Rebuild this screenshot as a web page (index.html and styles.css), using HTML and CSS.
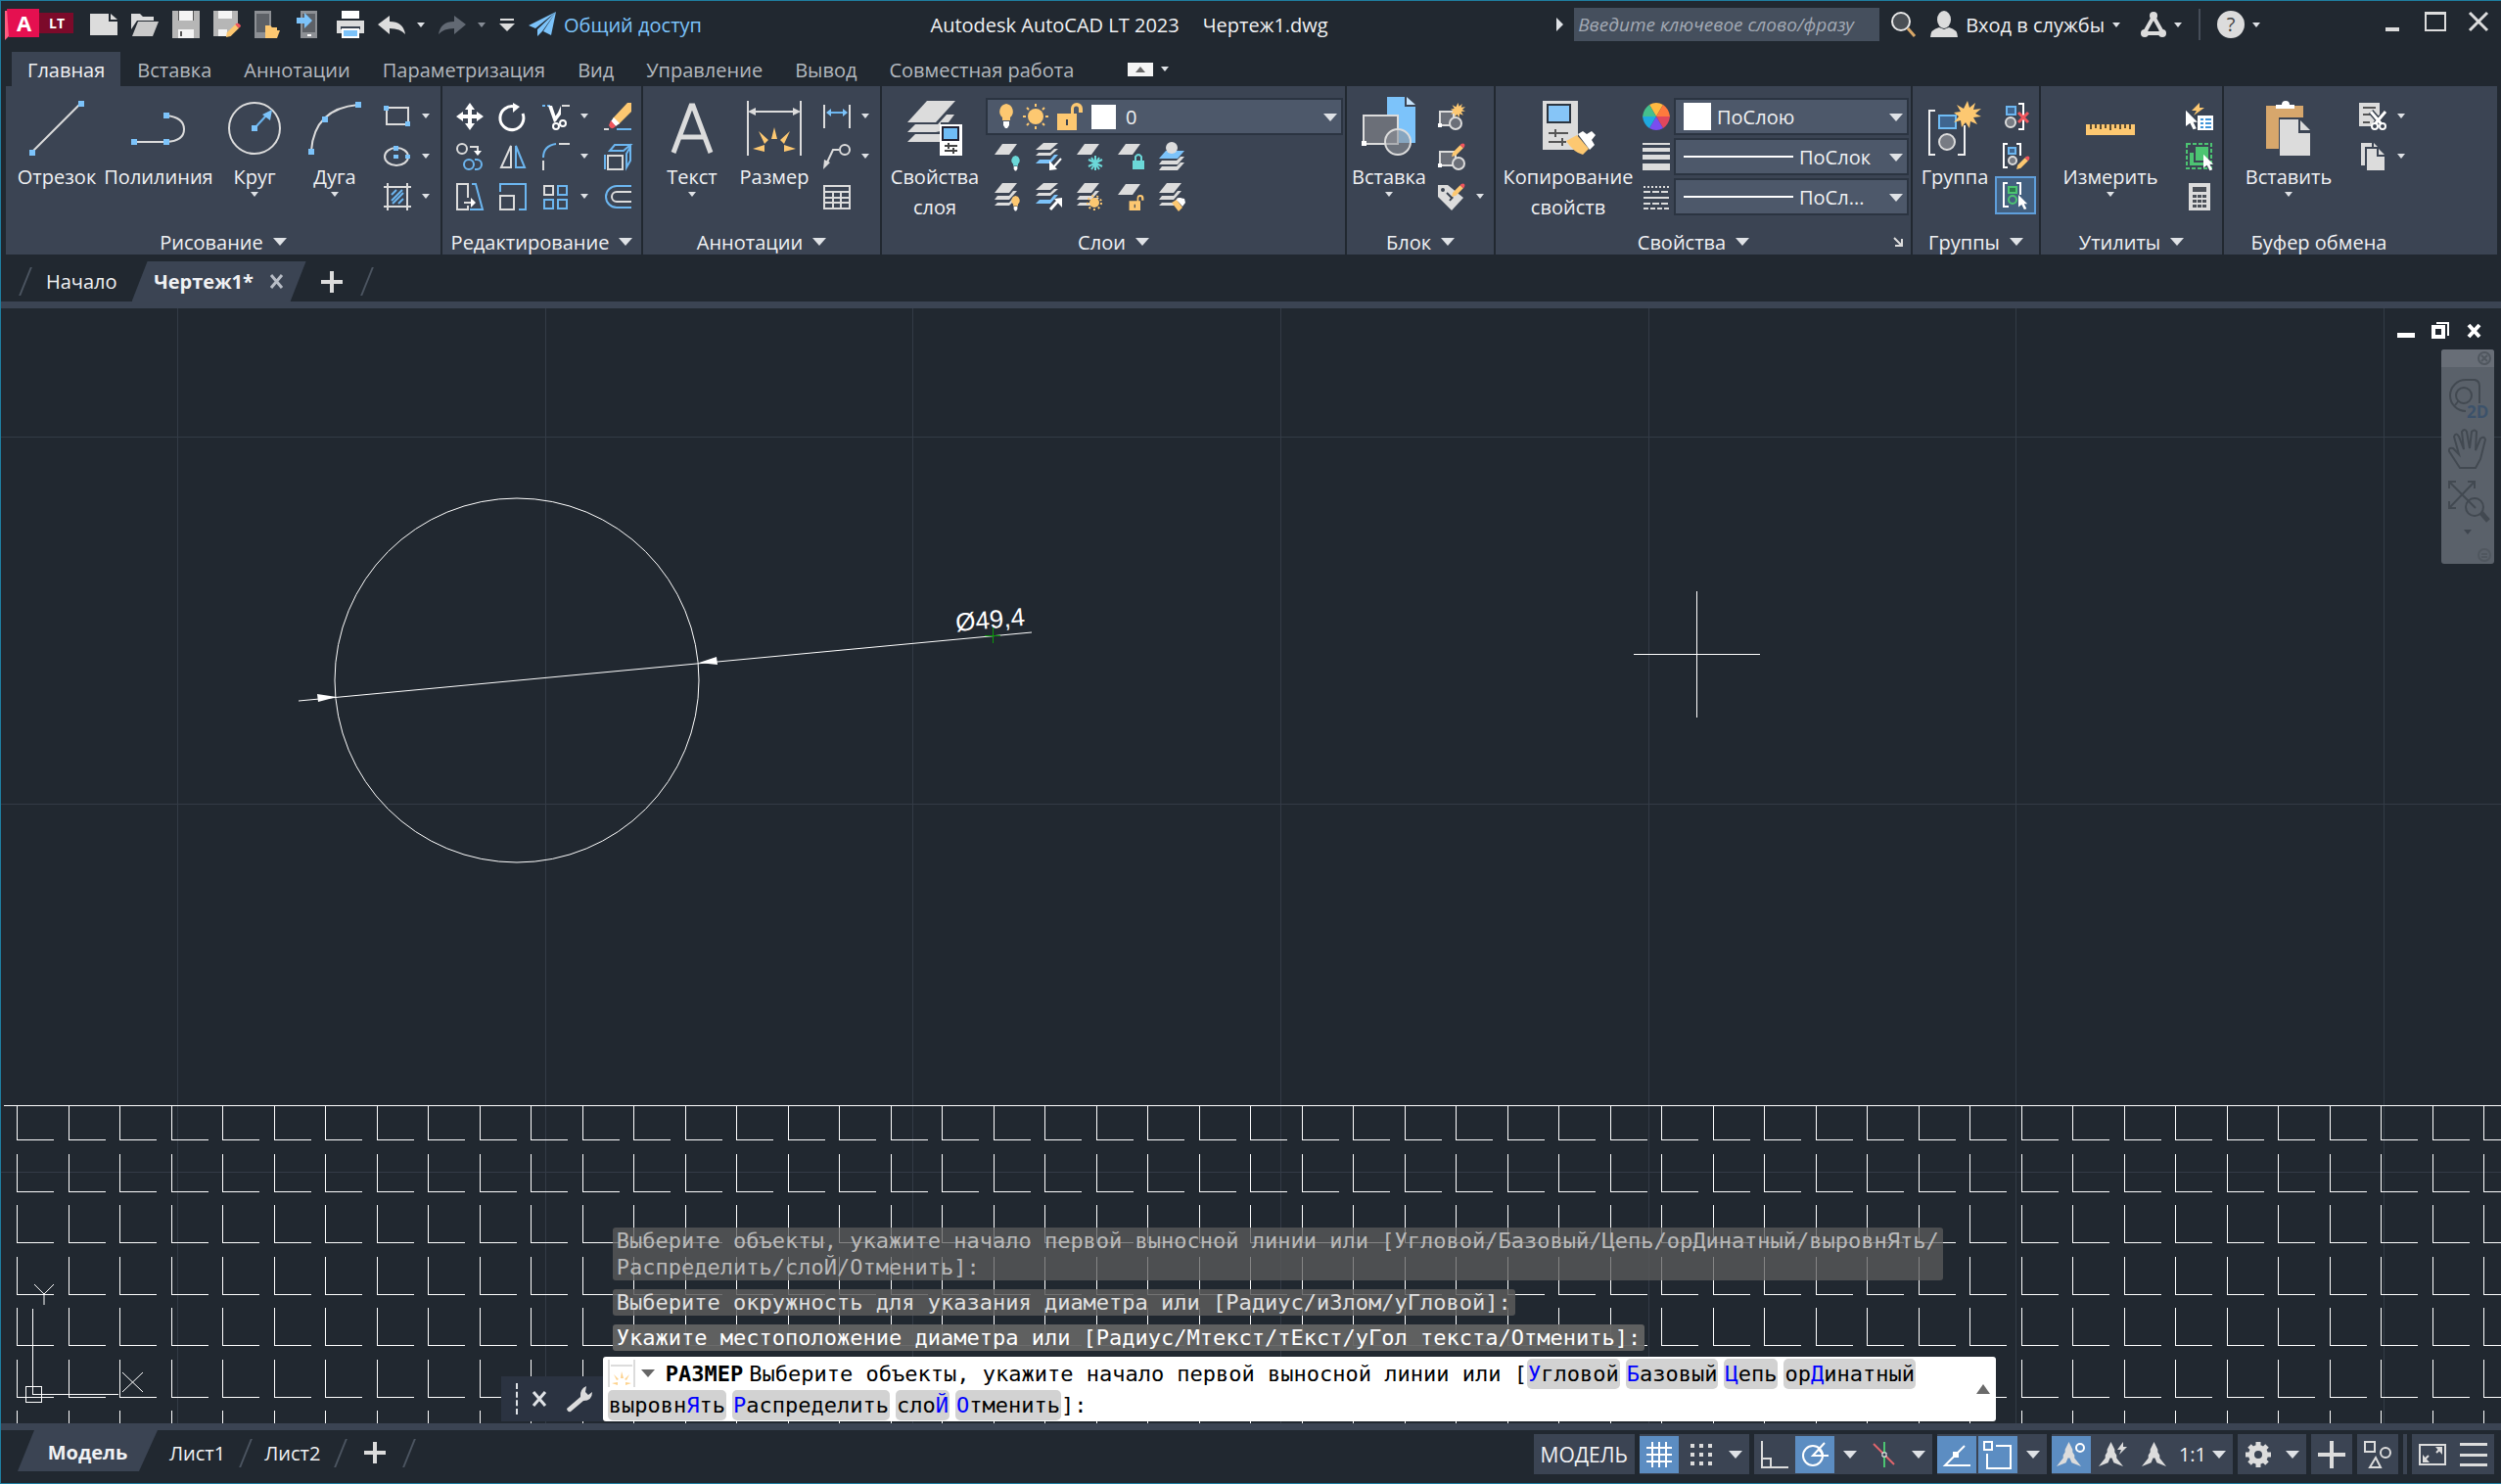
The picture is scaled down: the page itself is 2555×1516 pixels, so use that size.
FILE: index.html
```
<!DOCTYPE html>
<html lang="ru">

<head>
  <meta charset="UTF-8">
  <meta name="viewport" content="width=device-width, initial-scale=1.0">
  <title>Autodesk AutoCAD LT 2023</title>
  <link rel="stylesheet" href="styles.css">
</head>

<body>
  <!-- shared symbols -->
  <svg class="defs" aria-hidden="true">
    <symbol id="sheet1" viewBox="0 0 28 28"><path class="fl" d="M9 1h15l-8 11H1z"/></symbol>
    <symbol id="stack" viewBox="0 0 28 28">
      <path class="fl" d="M9 0h15l-8 10H1z"/>
      <path class="fl" d="M20 8h4l-8 9H1l3-4h12zM20 15h4l-8 8H1l3-3h12z"/>
    </symbol>
    <symbol id="stackblue" viewBox="0 0 28 28">
      <path class="fl" d="M9 0h15l-8 7H1z"/>
      <path class="fl" d="M20 6h4l-8 7H1l3-3h12z"/>
      <path class="fb" d="M20 12h4l-8 9H1l4-4h11z"/>
    </symbol>
    <symbol id="bulb" viewBox="0 0 16 26"><path d="M8 0a8 8 0 0 1 4 14v3H4v-3A8 8 0 0 1 8 0z"/><path class="fw" d="M5 18h6v4l-2 3H7l-2-3z"/></symbol>
    <symbol id="unlock" viewBox="0 0 26 28"><path d="M0 11h14V6a6 6 0 0 1 12 0v4h-4V6a2 2 0 0 0-5 0v5h3v17H0z"/><path d="M10 17v6" stroke="#39424f" stroke-width="2"/></symbol>
    <symbol id="pencil" viewBox="0 0 14 14"><path class="fy" d="M2 9l7-7 3 3-7 7-4 1z"/><path fill="#f0555c" d="M9 2l1-1q2-1 3 0t0 3l-1 1z"/></symbol>
    <symbol id="pencil-down" viewBox="0 0 17 17"><path class="fy" d="M2 11l9-9 4 4-9 9-5 1z"/><path fill="#f0555c" d="M11 2l1-1q2-1 4 1t0 3l-1 1z"/></symbol>
    <symbol id="cursor" viewBox="0 0 12 18"><path class="fw" d="M0 0l11 11H7l3 6-3 1-3-6-4 3z"/></symbol>
    <symbol id="burst" viewBox="0 0 28 28"><path class="fy" d="M14 0l2 7 6-5-2 7 8-1-6 5 6 3-8 1 4 7-7-3-1 7-4-6-4 5-1-7-7 2 5-6-5-4 7-1-4-7 7 4z"/></symbol>
    <symbol id="anno" viewBox="0 0 28 28"><path class="fl" d="M14 0l4 8v3l2 3v3l7 9-10-4-2-5h-2l-2 5-10 4 7-9v-3l2-3V8z"/></symbol>
  </svg>

  <div class="app">
    <header class="titlebar">
      <div class="logo">
        <svg width="70" height="32" viewBox="0 0 70 32">
          <path fill="#ff5c80" d="M0 2h7v23l-7 7z"/>
          <path fill="#e51050" d="M2 0h33v29H4z"/>
          <path fill="#7c0a2a" d="M35 4h35v21H35z"/>
          <text x="12" y="23" class="logo-a">A</text>
          <text x="45" y="20" class="logo-lt">LT</text>
        </svg>
      </div>
      <div class="quick">
        <button class="qbtn" aria-label="Создать"><svg width="28" height="28"><path class="fl" d="M0 3h19v8h9v14H0z"/><path class="fl" d="M21 3l7 6h-7z"/></svg></button>
        <button class="qbtn" aria-label="Открыть"><svg width="28" height="28"><path class="fl" d="M0 3h9l3 3h11v4H6L0 19z"/><path fill="#c9c9c9" d="M7 11h21l-6 15H1z"/></svg></button>
        <button class="qbtn" aria-label="Сохранить"><svg width="28" height="28"><path fill="#b6b6b6" d="M0 0h28v28H0z"/><path fill="#f4f4f4" d="M6 0h15v10H6zM6 19h16v9H6z"/><path fill="#555" d="M6 0h1v10H6zM21 0h1v10h-1zM8 21h2v5H8z"/></svg></button>
        <button class="qbtn" aria-label="Сохранить как"><svg width="28" height="28"><path fill="#b6b6b6" d="M0 0h25v14L13 26H0z"/><path fill="#f4f4f4" d="M5 0h14v8H5zM5 19h9v7H5z"/><use href="#pencil-down" x="12" y="12" width="16" height="16"/></svg></button>
        <button class="qbtn" aria-label="Открыть с мобильных устройств"><svg width="28" height="28"><path fill="#8d9095" d="M0 0h17v28H0z"/><path fill="#5d6167" d="M2 3h13v19H2z"/><path class="fy" d="M11 15h5l2 2h5v3h3l-3 8H11z"/></svg></button>
        <button class="qbtn" aria-label="Сохранить на мобильных устройствах"><svg width="28" height="28"><path fill="#8d9095" d="M5 0h17v28H5z"/><path fill="#5d6167" d="M7 3h13v19H7z"/><path class="fw" d="M12 24h4v2h-4z"/><path class="fb" d="M1 7h8V2l8 8-8 8v-5H1z"/></svg></button>
        <button class="qbtn" aria-label="Печать"><svg width="28" height="28"><path class="fw" d="M5 0h18v8H5z"/><path class="fl" d="M0 10h28v13H0z"/><path fill="#39424f" d="M4 16h20v3H4z"/><path class="fw" d="M5 18h18v10H5z"/><path class="fb" d="M7 20h14v6H7z"/></svg></button>
        <button class="qbtn undo" aria-label="Отменить"><svg width="28" height="28"><path class="fl" d="M0 14L12 5v6q14 0 16 13-5-6-16-6v6z"/></svg><i class="caret"></i></button>
        <button class="qbtn redo" aria-label="Повторить"><svg width="28" height="28"><path fill="#626973" d="M28 14L16 5v6Q2 11 0 24q5-6 16-6v6z"/></svg><i class="caret dim"></i></button>
        <button class="qbtn" aria-label="Адаптация"><svg width="16" height="16"><path class="fl" d="M1 2h14v2H1zM0 7h16l-8 8z"/></svg></button>
        <a class="share" href="#"><svg width="28" height="28" viewBox="0 0 28 28"><path class="fb" d="M28 1L0 15l7 3zM28 1L9 19v7l5-5zM28 1L15 21l8 4z"/></svg>Общий доступ</a>
      </div>
      <h1 class="doc-title"><span>Autodesk AutoCAD LT 2023</span><span>Чертеж1.dwg</span></h1>
      <div class="services">
        <i class="caret-right"></i>
        <input class="search" type="text" aria-label="Поиск" placeholder="Введите ключевое слово/фразу">
        <button class="icon-btn find" aria-label="Найти"><svg width="26" height="28"><circle cx="11" cy="11" r="9" fill="#4a4f55" stroke="#e8e8e8" stroke-width="2"/><path d="M18 18l7 8" stroke="#d9a868" stroke-width="3"/></svg></button>
        <button class="icon-btn login"><svg width="28" height="28"><ellipse cx="14" cy="9" rx="7" ry="9" class="fl"/><path class="fl" d="M0 27q0-8 9-10l5 2 5-2q9 2 9 10z"/></svg>Вход в службы<i class="caret"></i></button>
        <button class="icon-btn store" aria-label="Autodesk App Store"><svg width="26" height="28"><path d="M13 6L4 22M13 6l9 16M4 23h18" stroke="#dcdcdc" stroke-width="4" fill="none"/><circle cx="13" cy="5" r="4" class="fl"/><circle cx="4" cy="23" r="4" class="fl"/><circle cx="22" cy="23" r="4" class="fl"/></svg><i class="caret"></i></button>
        <i class="vline"></i>
        <button class="icon-btn" aria-label="Справка"><svg width="28" height="28"><circle cx="14" cy="14" r="14" class="fl"/><text x="14" y="21" class="help">?</text></svg><i class="caret"></i></button>
      </div>
      <div class="win">
        <button class="icon-btn" aria-label="Свернуть"><svg width="22" height="22"><path class="fl" d="M4 17h14v4H4z"/></svg></button>
        <button class="icon-btn" aria-label="Развернуть"><svg width="22" height="22"><path d="M1 2h20v18H1z" fill="none" stroke="#dcdcdc" stroke-width="2"/><path class="fl" d="M0 1h22v3H0z"/></svg></button>
        <button class="icon-btn" aria-label="Закрыть"><svg width="22" height="22"><path d="M2 2l18 18M20 2L2 20" stroke="#dcdcdc" stroke-width="3"/></svg></button>
      </div>
    </header>

    <nav class="tabs">
      <a class="tab active" href="#">Главная</a>
      <a class="tab" href="#">Вставка</a>
      <a class="tab" href="#">Аннотации</a>
      <a class="tab" href="#">Параметризация</a>
      <a class="tab" href="#">Вид</a>
      <a class="tab" href="#">Управление</a>
      <a class="tab" href="#">Вывод</a>
      <a class="tab" href="#">Совместная работа</a>
      <button class="fold" aria-label="Свернуть ленту"><svg width="26" height="14"><path fill="#f4f4f4" d="M0 0h26v14H0z"/><path fill="#666" d="M13 4l5 6H8z"/></svg><i class="caret"></i></button>
    </nav>

    <div class="ribbon">
      <!-- Рисование -->
      <section class="panel draw">
        <div class="panel-body">
          <button class="big w92"><svg width="56" height="56"><path class="s" d="M4 51L52 3"/><path class="fb" d="M0 50h6v6H0zM50 0h6v6h-6z"/></svg>Отрезок</button>
          <button class="big w112"><svg width="56" height="56"><path class="s" d="M4 42h32q18-1 18-13T36 15"/><path class="fb" d="M0 39h6v6H0zM33 39h6v6h-6zM33 12h6v6h-6z"/></svg>Полилиния</button>
          <button class="big w80"><svg width="56" height="56"><circle class="s" cx="28" cy="28" r="26"/><path class="b" d="M28 28l13-14"/><path class="fb" d="M25 25h6v6h-6zM46 9l-2 11-8-6z"/></svg>Круг<i class="caret"></i></button>
          <button class="big w80"><svg width="56" height="56"><path class="s" d="M4 51Q7 8 52 4"/><path class="fb" d="M1 49h6v6H1zM15 16h6v6h-6zM49 1h6v6h-6z"/></svg>Дуга<i class="caret"></i></button>
          <div class="stack">
            <button class="small" aria-label="Прямоугольник"><svg width="28" height="28"><path class="s" d="M3 5h22v17H3z"/><path class="fb" d="M0 3h5v5H0zM22 19h5v5h-5z"/></svg><i class="caret"></i></button>
            <button class="small" aria-label="Эллипс"><svg width="28" height="28"><ellipse class="s" cx="13" cy="14" rx="12" ry="9"/><path class="fb" d="M10 3h5v5h-5zM10 12h5v4h-5zM22 12h5v4h-5z"/></svg><i class="caret"></i></button>
            <button class="small" aria-label="Штриховка"><svg width="28" height="28"><path class="s" d="M0 4h28M0 24h28M4 0v28M24 0v28"/><path class="b" d="M8 12l5-5M8 18L19 7M9 21L20 10M15 21l5-5"/></svg><i class="caret"></i></button>
          </div>
        </div>
        <button class="panel-title">Рисование<i class="caret-lg"></i></button>
      </section>

      <!-- Редактирование -->
      <section class="panel edit">
        <div class="panel-body">
          <div class="stack">
            <button class="small" aria-label="Перенести"><svg width="28" height="28"><path class="fw" d="M14 0l5 7h-3v5h5V9l7 5-7 5v-3h-5v5h3l-5 7-5-7h3v-5H7v3l-7-5 7-5v3h5V7H9z"/></svg></button>
            <button class="small" aria-label="Копировать"><svg width="28" height="28"><circle class="s" cx="6" cy="6" r="5"/><path class="s" d="M14 4h8v6"/><path class="fw" d="M18 8h8l-4 5z"/><circle class="b" cx="13" cy="22" r="5"/><path class="b" d="M19 17h2a5 5 0 0 1 0 10h-2"/></svg></button>
            <button class="small" aria-label="Растянуть"><svg width="28" height="28"><path class="s" d="M12 15V1H1v26h11v-4"/><path class="b" d="M16 1h4l7 26H14"/><path class="s" d="M8 20h9"/><path class="fw" d="M15 15l5 5-5 5z"/></svg></button>
          </div>
          <div class="stack">
            <button class="small" aria-label="Повернуть"><svg width="28" height="28"><path d="M16 4A12 12 0 1 0 24 11" fill="none" stroke="#fff" stroke-width="3"/><path class="fw" d="M14 0l7 4-7 6z"/></svg></button>
            <button class="small" aria-label="Зеркало"><svg width="28" height="28"><path class="s" d="M12 3v22H2z"/><path class="b" d="M17 3v22h9z"/></svg></button>
            <button class="small" aria-label="Масштаб"><svg width="28" height="28"><path class="b" d="M1 9V1h26v26H20"/><path class="s" d="M1 13h14v14H1z"/></svg></button>
          </div>
          <div class="stack">
            <button class="small" aria-label="Обрезать"><svg width="28" height="28"><path class="b" d="M0 3h10" stroke-dasharray="3 2"/><path class="s" d="M20 3h8"/><path class="fw" d="M6 3h4l5 15-3 2zM19 3v9l-6 8-2-3 5-7z"/><circle cx="14" cy="24" r="3" fill="none" stroke="#fff" stroke-width="2"/><circle cx="21" cy="21" r="3" fill="none" stroke="#fff" stroke-width="2"/></svg><i class="caret"></i></button>
            <button class="small" aria-label="Сопряжение"><svg width="28" height="28"><path class="s" d="M17 1h11M1 18v10"/><path class="b" d="M1 15Q1 3 14 1"/></svg><i class="caret"></i></button>
            <button class="small" aria-label="Массив"><svg width="28" height="28"><path class="s" d="M2 3h9v9H2z"/><path class="b" d="M16 3h9v9h-9zM2 17h9v9H2zM16 17h9v9h-9z"/></svg><i class="caret"></i></button>
          </div>
          <div class="stack">
            <button class="small" aria-label="Стереть"><svg width="28" height="28"><path class="fy" d="M28 0v9L15 22l-6-6L24 0z"/><path class="fw" d="M10 15l6 6-4 3-5-5z"/><path fill="#f0555c" d="M7 18l5 6q-5 5-7-1z"/><path class="s" d="M0 27h5"/><path class="b" d="M13 27h15"/></svg></button>
            <button class="small" aria-label="Расчленить"><svg width="28" height="28"><path class="s" d="M4 13h15v14H4z"/><path class="b" d="M1 27V12M6 8l5-6h16l-7 6zM23 25V11l4-7v14z"/></svg></button>
            <button class="small" aria-label="Подобие"><svg width="28" height="28"><path class="b" d="M28 3H13a11 11 0 0 0 0 22h15"/><path class="s" d="M28 9H13a5 5 0 0 0 0 10h15"/></svg></button>
          </div>
        </div>
        <button class="panel-title">Редактирование<i class="caret-lg"></i></button>
      </section>

      <!-- Аннотации -->
      <section class="panel annot">
        <div class="panel-body">
          <button class="big w84"><svg width="56" height="56"><path d="M9 53L27 5h2l18 48M15 37h26" fill="none" stroke="#dcdcdc" stroke-width="5"/></svg>Текст<i class="caret"></i></button>
          <button class="big w84"><svg width="56" height="56"><path class="s" d="M1 0v56M55 0v56M4 11h48"/><path class="fl" d="M1 11l8-4v8zM55 11l-8-4v8z"/><path class="fy" d="M28 27l3 12h-6zM12 31l10 9-4 4zM44 31l-10 9 4 4zM6 49l12-4v7zM50 49l-12-4v7z"/></svg>Размер</button>
          <div class="stack">
            <button class="small" aria-label="Линейный"><svg width="28" height="28"><path class="s" d="M1 2v24M27 2v24"/><path class="b" d="M4 10h20"/><path class="fb" d="M3 10l5-4v8zM25 10l-5-4v8z"/></svg><i class="caret"></i></button>
            <button class="small" aria-label="Выноска"><svg width="28" height="28"><circle class="s" cx="22" cy="7" r="5"/><path class="s" d="M16 7h-6L3 22"/><path class="fl" d="M0 27l1-10 6 3z"/></svg><i class="caret"></i></button>
            <button class="small" aria-label="Таблица"><svg width="28" height="28"><path class="s" d="M1 3h26v23H1zM1 9h26M1 15h26M1 20h26M10 9v17M18 9v17"/></svg></button>
          </div>
        </div>
        <button class="panel-title">Аннотации<i class="caret-lg"></i></button>
      </section>

      <!-- Слои -->
      <section class="panel layers">
        <div class="panel-body">
          <button class="big w98"><svg width="56" height="56"><path class="fl" d="M20 0h29L29 22H0z"/><path class="fl" d="M40 14h8l-6 8H34v9l-5 1H0l8-8h23zM8 34h25v8H0z"/><path class="fw" d="M33 24h23v32H33z"/><path fill="#6fbcf5" stroke="#223" stroke-width="2" d="M36 27h16v13H36z"/><path d="M38 46h13M38 51h13M42 43v6M47 48v6" stroke="#444" stroke-width="2"/></svg>Свойства<br>слоя</button>
          <div class="layer-col">
            <div class="combo layer-combo">
              <svg width="16" height="26" class="fy"><use href="#bulb" width="16" height="26"/></svg>
              <svg width="26" height="26"><circle class="fy" cx="13" cy="13" r="8"/><path d="M13 0v3M13 23v3M0 13h3M23 13h3M4 4l2 2M20 20l2 2M22 4l-2 2M6 20l-2 2" stroke="#fdc871" stroke-width="2"/></svg>
              <svg width="26" height="28" class="fy"><use href="#unlock" width="26" height="28"/></svg>
              <i class="swatch"></i>
              <select aria-label="Слой"><option>0</option></select>
              <i class="caret-lg"></i>
            </div>
            <div class="layer-tools">
              <button class="small" aria-label="Отключить"><svg width="28" height="28"><use href="#sheet1" width="28" height="28"/><use href="#bulb" x="17" y="13" width="11" height="16" fill="#6bd8d8"/></svg></button>
              <button class="small" aria-label="Изолировать"><svg width="28" height="28"><use href="#stackblue" width="28" height="28"/><path d="M27 16l-8 9" stroke="#fff" stroke-width="2"/><path class="fw" d="M15 28V18l8 9z"/></svg></button>
              <button class="small" aria-label="Заморозить"><svg width="28" height="28"><use href="#sheet1" width="28" height="28"/><path d="M20 13v15M13 17l14 7M27 17l-14 7M16 15l8 12M24 15l-8 12" stroke="#6bd8d8" stroke-width="2"/></svg></button>
              <button class="small" aria-label="Блокировать"><svg width="28" height="28"><use href="#sheet1" width="28" height="28"/><path fill="#6bd8d8" d="M16 18h12v9H16z"/><path d="M19 18v-4q3-4 6 0v4" stroke="#6bd8d8" stroke-width="2" fill="none"/></svg></button>
              <button class="small" aria-label="Сделать текущим"><svg width="28" height="28"><path class="fb" d="M8 8h19l-7 8H1z"/><path class="fl" d="M23 14h4l-7 8H1l3-4h15zM23 20h4l-7 8H1l3-4h15z"/><circle class="fl" cx="14" cy="5" r="6"/></svg></button>
              <button class="small" aria-label="Включить все"><svg width="28" height="28" class="fy"><use href="#stack" width="28" height="28"/><use href="#bulb" x="17" y="13" width="11" height="16"/></svg></button>
              <button class="small" aria-label="Отменить изоляцию"><svg width="28" height="28"><use href="#stackblue" width="28" height="28"/><path d="M16 27l8-9" stroke="#fff" stroke-width="3"/><path class="fw" d="M28 15v10l-8-9z"/></svg></button>
              <button class="small" aria-label="Разморозить все"><svg width="28" height="28"><use href="#stack" width="28" height="28"/><circle class="fy" cx="19" cy="20" r="5"/><circle cx="19" cy="20" r="7" fill="none" stroke="#fdc871" stroke-width="2" stroke-dasharray="2 3"/></svg></button>
              <button class="small" aria-label="Разблокировать"><svg width="28" height="28" class="fy"><use href="#sheet1" width="28" height="28"/><use href="#unlock" x="12" y="12" width="16" height="16"/></svg></button>
              <button class="small" aria-label="Соответствие слоев"><svg width="28" height="28"><use href="#stack" width="28" height="28"/><path class="fy" d="M14 20l5-3 6 8-4 4z"/><path class="fw" d="M19 17l3-2 5 1 1 4-3 4z"/></svg></button>
            </div>
          </div>
        </div>
        <button class="panel-title">Слои<i class="caret-lg"></i></button>
      </section>

      <!-- Блок -->
      <section class="panel block">
        <div class="panel-body">
          <button class="big w76"><svg width="56" height="56" viewBox="0 4 56 56"><path class="fb" d="M26 0h18v10h11v37H26z"/><path fill="#c8e4fb" d="M46 0l9 8h-9z"/><path d="M2 19h35v29H2z" fill="#6b6f78" stroke="#dcdcdc" stroke-width="2"/><circle cx="37" cy="46" r="13" fill="#8f929999" stroke="#dcdcdc" stroke-width="2"/><path class="fw" d="M0 45h5v5H0z"/></svg>Вставка<i class="caret"></i></button>
          <div class="stack">
            <button class="small" aria-label="Создать блок"><svg width="28" height="28"><path d="M2 9h14v14H2z" fill="#6b6f78" stroke="#dcdcdc" stroke-width="2"/><circle cx="18" cy="21" r="6" fill="#6b6f78" stroke="#dcdcdc" stroke-width="2"/><path class="fw" d="M0 21h4v4H0z"/><use href="#burst" x="13" width="15" height="15"/></svg></button>
            <button class="small" aria-label="Редактор блоков"><svg width="28" height="28"><path d="M2 9h16v14H2z" fill="#6b6f78" stroke="#dcdcdc" stroke-width="2"/><circle cx="21" cy="21" r="6" fill="#6b6f78" stroke="#dcdcdc" stroke-width="2"/><path class="fw" d="M0 21h4v4H0z"/><use href="#pencil" x="13" width="15" height="15"/></svg></button>
            <button class="small" aria-label="Редактировать атрибуты"><svg width="28" height="28"><path class="fl" d="M0 2h10l16 13-12 13L0 14z"/><path d="M9 10l6 6M12 18l3-4" stroke="#39424f" stroke-width="2"/><circle cx="5" cy="7" r="2" fill="#39424f"/><use href="#pencil" x="13" width="15" height="15"/></svg><i class="caret"></i></button>
          </div>
        </div>
        <button class="panel-title">Блок<i class="caret-lg"></i></button>
      </section>

      <!-- Свойства -->
      <section class="panel props">
        <div class="panel-body">
          <button class="big w136"><svg width="56" height="56"><path class="fl" d="M2 0h36v50H2z"/><path fill="#86c5f7" stroke="#2c3540" stroke-width="2" d="M7 4h23v18H7z"/><path d="M8 33h20M8 42h18M15 29v8M22 38v8" stroke="#555" stroke-width="2"/><path class="fy" d="M26 41l11-6 12 14-6 6q-9-2-17-14z"/><path class="fw" d="M38 34l5-3 4 3 5-3 4 4-4 5 3 5-5 5z"/></svg>Копирование<br>свойств</button>
          <div class="stack">
            <span class="small"><svg width="28" height="28"><path fill="#ffb940" d="M14 14L7 2q7-4 14 0z"/><path fill="#ff7a3d" d="M14 14l7-12q6 4 7 12z"/><path fill="#e0475c" d="M14 14h14q-1 8-7 12z"/><path fill="#7a4df0" d="M14 14l7 12q-7 4-14 0z"/><path fill="#1fa9e0" d="M14 14L7 26Q1 22 0 14z"/><path fill="#45c08c" d="M14 14H0Q1 6 7 2z"/></svg></span>
            <span class="small"><svg width="28" height="28"><path class="fl" d="M0 0h28v2H0zM0 5h28v4H0zM0 12h28v5H0zM0 21h28v7H0z"/></svg></span>
            <span class="small"><svg width="28" height="28"><path d="M1 4h26" stroke="#dcdcdc" stroke-width="2" stroke-dasharray="2 2"/><path d="M1 9h26M1 21h26" stroke="#dcdcdc" stroke-width="2" stroke-dasharray="7 2"/><path d="M1 15h26" stroke="#dcdcdc" stroke-width="2"/><path d="M1 26h26" stroke="#dcdcdc" stroke-width="2" stroke-dasharray="5 2"/></svg></span>
          </div>
          <div class="combos">
            <div class="combo"><i class="swatch lg"></i><select aria-label="Цвет"><option>ПоСлою</option></select><i class="caret-lg"></i></div>
            <div class="combo"><i class="rule"></i><select aria-label="Вес линий"><option>ПоСлок</option></select><i class="caret-lg"></i></div>
            <div class="combo"><i class="rule"></i><select aria-label="Тип линий"><option>ПоСл...</option></select><i class="caret-lg"></i></div>
          </div>
        </div>
        <div class="panel-foot">
          <button class="panel-title">Свойства<i class="caret-lg"></i></button>
          <button class="launcher" aria-label="Свойства"><svg width="10" height="10"><path d="M1 1l7 7M9 2v7H2" stroke="#dcdcdc" stroke-width="2" fill="none"/></svg></button>
        </div>
      </section>

      <!-- Группы -->
      <section class="panel groups">
        <div class="panel-body">
          <button class="big w74"><svg width="56" height="56"><path d="M8 10H2v45h6M31 55h7V25" fill="none" stroke="#f0f0f0" stroke-width="2"/><path d="M12 15h17v13H12z" fill="#3f658f" stroke="#6fbcf5" stroke-width="2"/><circle cx="20" cy="42" r="8" fill="#777b83" stroke="#dcdcdc" stroke-width="2"/><use href="#burst" x="27" width="28" height="28"/></svg>Группа</button>
          <div class="stack">
            <button class="small" aria-label="Разгруппировать"><svg width="28" height="28"><path d="M4 4h9v8H4z" fill="#3f658f" stroke="#6cb6f0" stroke-width="2"/><circle cx="8" cy="20" r="5" fill="#777b83" stroke="#dcdcdc" stroke-width="2"/><path d="M16 1h5v26h-5" fill="none" stroke="#fff" stroke-width="2"/><path d="M16 10l10 10M26 10L16 20" stroke="#f0555c" stroke-width="3"/></svg></button>
            <button class="small" aria-label="Редактирование группы"><svg width="28" height="28"><path d="M5 1H1v24h4M14 1h4v12" fill="none" stroke="#fff" stroke-width="2"/><path d="M6 5h7v6H6z" fill="#3f658f" stroke="#6cb6f0" stroke-width="2"/><circle cx="10" cy="18" r="4" fill="#777b83" stroke="#dcdcdc" stroke-width="2"/><use href="#pencil" x="13" y="13" width="15" height="15"/></svg></button>
            <button class="small pressed" aria-label="Выбор группы"><svg width="28" height="28"><path d="M6 1H2v24h5M15 1h4v12" fill="none" stroke="#fff" stroke-width="2"/><path d="M7 5h8v6H7z" fill="#2b7a4d" stroke="#4cc472" stroke-width="2"/><circle cx="11" cy="18" r="4" fill="none" stroke="#4cc472" stroke-width="2"/><use href="#cursor" x="17" y="13" width="10" height="15"/></svg></button>
          </div>
        </div>
        <button class="panel-title">Группы<i class="caret-lg"></i></button>
      </section>

      <!-- Утилиты -->
      <section class="panel utils">
        <div class="panel-body">
          <button class="big w110"><svg width="56" height="56"><path class="fy" d="M3 24h50v11H3z"/><path d="M8 24v5M13 24v4M18 24v5M23 24v4M28 24v6M33 24v4M38 24v5M43 24v4M48 24v5" stroke="#5a4a30" stroke-width="2"/></svg>Измерить<i class="caret"></i></button>
          <div class="stack">
            <button class="small" aria-label="Быстрый выбор"><svg width="28" height="28"><use href="#cursor" y="7" width="13" height="21"/><path class="fw" d="M12 13h16v15H12z"/><path d="M15 17h3M20 17h6M15 21h3M20 21h6M15 25h3M20 25h6" stroke="#3f94d8" stroke-width="2"/><path class="fy" d="M14 0l-8 8h5l-3 5 11-8h-5z"/></svg></button>
            <button class="small" aria-label="Выбрать все"><svg width="28" height="28"><path d="M1 1h25v25H1z" fill="none" stroke="#4cc472" stroke-width="2" stroke-dasharray="4 2"/><path fill="#4cc472" d="M10 4h13v14H10zM4 10h4v10h10v3H4z"/><use href="#cursor" x="18" y="11" width="11" height="18"/></svg></button>
            <button class="small" aria-label="Калькулятор"><svg width="28" height="28"><path class="fl" d="M3 0h22v28H3z"/><path fill="#4b5058" d="M7 4h14v5H7zM7 12h4v3H7zM12 12h4v3h-4zM17 12h4v3h-4zM7 17h4v3H7zM12 17h4v3h-4zM17 17h4v3h-4zM7 22h4v3H7zM12 22h4v3h-4zM17 22h4v3h-4z"/></svg></button>
          </div>
        </div>
        <button class="panel-title">Утилиты<i class="caret-lg"></i></button>
      </section>

      <!-- Буфер обмена -->
      <section class="panel clip">
        <div class="panel-body">
          <button class="big w100"><svg width="56" height="56"><path fill="#d7a76c" d="M5 5h38v12H18v32H5z"/><path class="fw" d="M15 4h6q0-4 4-4t4 4h5v4H15z"/><path class="fl" d="M19 19h19v14h12v23H19z"/><path class="fl" d="M40 20l10 10H40z"/></svg>Вставить<i class="caret"></i></button>
          <div class="stack">
            <button class="small" aria-label="Вырезать"><svg width="28" height="28"><path class="fl" d="M0 0h21v24H0z"/><path d="M4 5h13M4 12h7M4 20h7" stroke="#555" stroke-width="2"/><path d="M12 9l13 15M27 9L15 24" stroke="#39424f" stroke-width="6"/><path d="M12 9l11 13M27 9L16 22" stroke="#fff" stroke-width="3"/><circle cx="16" cy="24" r="3" stroke="#fff" stroke-width="2" fill="#39424f"/><circle cx="24" cy="24" r="3" stroke="#fff" stroke-width="2" fill="#39424f"/></svg><i class="caret"></i></button>
            <button class="small" aria-label="Копировать в буфер"><svg width="28" height="28"><path class="fl" d="M2 0h11v4H6v19H2zM15 0l4 4h-4z"/><path class="fl" d="M8 6h10v8h8v14H8zM20 6l6 6h-6z"/></svg><i class="caret"></i></button>
          </div>
        </div>
        <div class="panel-title">Буфер обмена</div>
      </section>
      <div class="panel-rest"></div>
    </div>

    <nav class="files">
      <i class="slash"></i>
      <a class="file" href="#">Начало</a>
      <div class="file-active"><a href="#">Чертеж1*</a><button aria-label="Закрыть"><svg width="15" height="15"><path d="M2 1l11 13M13 1L2 14" stroke="#b8bdc6" stroke-width="3"/></svg></button></div>
      <button class="plus" aria-label="Новый чертеж"><svg width="22" height="22"><path class="fl" d="M9 0h4v9h9v4h-9v9H9v-9H0V9h9z"/></svg></button>
      <i class="slash"></i>
    </nav>

    <main class="canvas">
      <svg class="drawing" width="100%" height="100%">
        <defs>
          <pattern id="hatch" x="16" y="849" width="105" height="105" patternUnits="userSpaceOnUse">
            <path fill="#fff" d="M0 0h38v1H0zM53 0h38v1H53zM0 53h38v1H0zM53 53h38v1H53zM0 15h1v38H0zM0 67h1v38H0zM53 15h1v38h-1zM53 67h1v38h-1z"/>
          </pattern>
        </defs>
        <!-- grid -->
        <path class="grid" d="M180 0v1140M556 0v1140M931 0v1140M1307 0v1140M1683 0v1140M2058 0v1140M2434 0v1140M0 131h2554M0 506h2554M0 882h2554"/>
        <!-- hatch -->
        <rect x="2" y="814" width="100%" height="100%" fill="url(#hatch)"/>
        <rect x="3" y="814" width="100%" height="1" fill="#fff"/>
        <!-- circle and its diameter -->
        <circle cx="527" cy="380" r="186" class="line"/>
        <path class="line" d="M304 401L1053 331"/>
        <path class="fw" d="M343 397l-20-3 1 8zM713 362l18-6 1 8z"/>
        <text class="dim-text" transform="translate(976 330) rotate(-5)">Ø49,4</text>
        <path class="crisp" d="M1005 334h16M1013 326v16" stroke="#0a9a0a"/>
        <!-- crosshair -->
        <path class="line crisp" d="M1668 353h129M1732 289v129"/>
        <!-- UCS icon -->
        <path class="line crisp" d="M25 1101h16v16H25zM32 1022v87h88"/>
        <path class="line" d="M34 997l10 10 10-10M44 1007v11M124 1087l21 20M145 1087l-21 20"/>
      </svg>

      <div class="doc-win">
        <button aria-label="Свернуть чертеж"><svg width="18" height="18"><path class="fw" d="M0 11h18v5H0z"/></svg></button>
        <button aria-label="Восстановить чертеж"><svg width="18" height="18"><path d="M2 5h10v10H2z" fill="none" stroke="#fff" stroke-width="4"/><path d="M5 1h12v13" fill="none" stroke="#fff" stroke-width="2"/></svg></button>
        <button aria-label="Закрыть чертеж"><svg width="18" height="18"><path d="M3 3l11 12M14 3L3 15" stroke="#fff" stroke-width="4"/></svg></button>
      </div>

      <div class="navbar">
        <div class="nav-head"><svg width="14" height="14"><circle cx="7" cy="7" r="6"/><path d="M4 4l6 6M10 4l-6 6"/></svg></div>
        <button aria-label="Штурвал 2D"><svg width="44" height="44"><path d="M20 35A16 16 0 1 1 20 3h9q5 1 5 6v18"/><circle cx="18" cy="19" r="8"/><path d="M9 29l4-5"/><text x="21" y="42">2D</text></svg></button>
        <button aria-label="Панорамирование"><svg width="44" height="44"><path d="M14 41L3 24q-1-4 4-3l6 6-5-18q2-5 5 0l5 13-2-18q3-4 5 0l3 17 2-17q3-3 5 0l-1 19 5-12q4-3 5 1l-5 20-5 9z"/></svg></button>
        <button aria-label="Показать до границ"><svg width="44" height="44"><path d="M3 3l27 27M29 3L3 30M3 10V3h7M22 3h7v7M3 23v7h7"/><circle cx="29" cy="29" r="9"/><path d="M36 35l7 8" stroke-width="5"/></svg></button>
        <i class="caret nav-caret"></i>
        <div class="nav-foot"><svg width="14" height="14"><circle cx="7" cy="7" r="6"/><path d="M4 6h6M4 9h6"/></svg></div>
      </div>

      <div class="command">
        <div class="history">
          <p class="old">Выберите объекты, укажите начало первой выносной линии или [Угловой/Базовый/Цепь/орДинатный/выровнЯть/<br>Распределить/слоЙ/Отменить]:</p>
          <p class="mid">Выберите окружность для указания диаметра или [Радиус/иЗлом/уГловой]:</p>
          <p>Укажите местоположение диаметра или [Радиус/Мтекст/тЕкст/уГол текста/Отменить]:</p>
        </div>
        <div class="cmd-row">
          <div class="cmd-handle">
            <i class="grip"></i>
            <button aria-label="Закрыть"><svg width="16" height="16"><path d="M2 1l12 14M14 1L2 15" stroke="#dfe2e6" stroke-width="3"/></svg></button>
            <button aria-label="Адаптация"><svg width="26" height="26"><path class="fl" d="M0 23L14 11q-1-8 6-11l-1 6 3 3 4-3q0 9-9 9L4 26q-3 1-4-3z"/></svg></button>
          </div>
          <div class="cmd-line">
            <div class="cmd-text">
              <svg class="cmd-icon" width="28" height="28"><path d="M1 0v28M27 0v28M3 6h22" stroke="#d4d4d4" stroke-width="2"/><path class="fy" d="M14 12l2 7h-3zM6 15l5 5-2 1zM22 15l-5 5 2 1zM4 24l6-1v3zM24 24l-6-1v3z"/></svg>
              <i class="caret-lg dark"></i>
              <b>РАЗМЕР</b>
              <span>Выберите объекты, укажите начало первой выносной линии или [</span>
              <button class="opt"><em>У</em>гловой</button>
              <button class="opt"><em>Б</em>азовый</button>
              <button class="opt"><em>Ц</em>епь</button>
              <button class="opt">ор<em>Д</em>инатный</button>
            </div>
            <div class="cmd-text">
              <button class="opt">выровн<em>Я</em>ть</button>
              <button class="opt"><em>Р</em>аспределить</button>
              <button class="opt">сло<em>Й</em></button>
              <button class="opt"><em>О</em>тменить</button>
              <span class="tail">]:</span>
            </div>
            <button class="cmd-up" aria-label="Журнал команд"><svg width="14" height="10"><path fill="#6a6a6a" d="M7 0l7 10H0z"/></svg></button>
          </div>
        </div>
      </div>
    </main>

    <footer class="status">
      <div class="layouts">
        <a class="model" href="#">Модель</a>
        <a class="layout" href="#">Лист1</a>
        <i class="slash"></i>
        <a class="layout" href="#">Лист2</a>
        <i class="slash"></i>
        <button class="plus" aria-label="Новый лист"><svg width="22" height="22"><path class="fl" d="M9 0h4v9h9v4h-9v9H9v-9H0V9h9z"/></svg></button>
        <i class="slash"></i>
      </div>
      <div class="modes">
        <div class="group"><button class="mode-text">МОДЕЛЬ</button></div>
        <div class="group">
          <button class="mode on" aria-label="Сетка"><svg width="28" height="28"><path d="M7 1v26M14 1v26M21 1v26M1 7h26M1 14h26M1 21h26" stroke="#fff" stroke-width="2"/></svg></button>
          <button class="mode" aria-label="Шаг"><svg width="28" height="28"><path class="fl" d="M3 3h4v4H3zM12 3h4v4h-4zM21 3h4v4h-4zM3 12h4v4H3zM12 12h4v4h-4zM21 12h4v4h-4zM3 21h4v4H3zM12 21h4v4h-4zM21 21h4v4h-4z"/></svg></button>
          <button class="drop" aria-label="Параметры шага"><i class="caret-lg"></i></button>
        </div>
        <div class="group">
          <button class="mode" aria-label="Орто"><svg width="28" height="28"><path class="s" d="M1 0v27h27M1 18h9v9"/></svg></button>
          <button class="mode on" aria-label="Полярное отслеживание"><svg width="28" height="28"><circle cx="12" cy="15" r="10" fill="none" stroke="#fff" stroke-width="2"/><path d="M28 15H12L24 2M18 9q4 3 4 6" fill="none" stroke="#fff" stroke-width="2"/></svg></button>
          <button class="drop" aria-label="Углы"><i class="caret-lg"></i></button>
          <button class="mode" aria-label="Изометрия"><svg width="28" height="28"><path d="M3 3l21 21" stroke="#e0666c" stroke-width="2"/><path d="M14 1v26" stroke="#4cc472" stroke-width="2"/><path d="M12 12h4v4h-4z" fill="#39424f" stroke="#fff"/></svg></button>
          <button class="drop" aria-label="Плоскости"><i class="caret-lg"></i></button>
        </div>
        <div class="group">
          <button class="mode on" aria-label="Объектное отслеживание"><svg width="28" height="28"><path d="M28 25H2L22 5" fill="none" stroke="#fff" stroke-width="2"/><path class="fw" d="M10 11h6v6h-6z"/></svg></button>
          <button class="mode on" aria-label="Объектная привязка"><svg width="28" height="28"><path d="M12 5h15v23H3V13" fill="none" stroke="#fff" stroke-width="2"/><path d="M0 1h8v8H0z" fill="none" stroke="#fff" stroke-width="2"/></svg></button>
          <button class="drop" aria-label="Привязки"><i class="caret-lg"></i></button>
        </div>
        <div class="group">
          <button class="mode on" aria-label="Показать аннотативные объекты"><svg width="28" height="28"><use href="#anno" x="-2" y="1" width="27" height="27"/><circle cx="23" cy="7" r="4" fill="#5c8dc2" stroke="#fff" stroke-width="2"/></svg></button>
          <button class="mode" aria-label="Автомасштаб"><svg width="28" height="28"><use href="#anno" x="-2" y="1" width="27" height="27"/><path class="fl" d="M24 1l-6 8h4l-2 5 8-8h-4z"/></svg></button>
          <button class="mode" aria-label="Масштаб аннотаций"><svg width="28" height="28"><use href="#anno" x="0" y="1" width="27" height="27"/></svg></button>
          <button class="scale">1:1<i class="caret-lg"></i></button>
        </div>
        <div class="group">
          <button class="mode" aria-label="Рабочее пространство"><svg width="28" height="28"><circle cx="14" cy="14" r="7" fill="none" stroke="#dcdcdc" stroke-width="6"/><path d="M14 1v4M14 23v4M1 14h4M23 14h4M5 5l3 3M20 20l3 3M23 5l-3 3M8 20l-3 3" stroke="#dcdcdc" stroke-width="5"/></svg></button>
          <button class="drop" aria-label="Выбор пространства"><i class="caret-lg"></i></button>
        </div>
        <div class="group"><button class="mode" aria-label="Монитор аннотаций"><svg width="28" height="28"><path class="fl" d="M12 0h4v12h12v4H16v12h-4V16H0v-4h12z"/></svg></button></div>
        <div class="group"><button class="mode" aria-label="Изоляция объектов"><svg width="28" height="28"><path class="s" d="M1 1h10v10H1zM6 27l6-10 5 10z"/><circle class="s" cx="22" cy="12" r="5"/></svg></button></div>
        <div class="group sliver"></div>
        <div class="group">
          <button class="mode" aria-label="Очистить экран"><svg width="28" height="28"><path class="s" d="M1 4h26v20H1z"/><path class="s" d="M5 20l5-5M18 12l5-5"/><path class="fl" d="M4 14v8h7zM24 6v8l-7-8z"/></svg></button>
          <button class="mode" aria-label="Адаптация строки состояния"><svg width="28" height="28"><path class="fl" d="M0 2h28v3H0zM0 13h28v3H0zM0 23h28v3H0z"/></svg></button>
        </div>
      </div>
    </footer>
  </div>
</body>

</html>
```
FILE: styles.css
```
* {
  margin: 0;
  padding: 0;
  box-sizing: border-box;
}

body {
  background-color: #212830;
  color: #f0f1f3;
  font-family: "Segoe UI", "Open Sans", "Noto Sans", sans-serif;
  font-size: 20px;
}

button {
  border: none;
  background: none;
  color: inherit;
  font: inherit;
  cursor: pointer;
}

a {
  color: inherit;
  text-decoration: none;
}

svg {
  display: block;
  flex: none;
  overflow: visible;
}

i {
  flex: none;
  font-style: normal;
}

.defs {
  position: absolute;
  width: 0;
  height: 0;
}

/* icon colours */
.fl {
  fill: #dcdcdc;
}

.fw {
  fill: #fff;
}

.fb {
  fill: #7cc3fa;
}

.fy {
  fill: #fdc871;
}

.s {
  fill: none;
  stroke: #dcdcdc;
  stroke-width: 2;
}

.b {
  fill: none;
  stroke: #6cb6f0;
  stroke-width: 2;
}

/* arrows */
.caret {
  border: 4px solid transparent;
  border-top: 5px solid #dfe2e6;
  border-bottom: none;
}

.caret.dim {
  border-top-color: #868c95;
}

.caret-lg {
  border: 7px solid transparent;
  border-top: 8px solid #dfe2e6;
  border-bottom: none;
}

.caret-lg.dark {
  border-top-color: #666;
}

.caret-right {
  border: 7px solid transparent;
  border-left: 7px solid #dfe2e6;
  border-right: none;
}

.slash {
  width: 2px;
  height: 29px;
  margin: 0 6px;
  background-color: #4c5561;
  transform: skewX(-22deg);
}

.app {
  display: flex;
  flex-direction: column;
  min-height: 100vh;
  border: 1px solid #1f7fa0;
  border-right: none;
}

/* title bar */
.titlebar {
  display: flex;
  align-items: center;
  height: 48px;
  padding-left: 4px;
}

.logo-a {
  fill: #fff;
  font-size: 22px;
  font-weight: bold;
}

.logo-lt {
  fill: #fff;
  font-size: 14px;
  font-weight: bold;
}

.quick {
  display: flex;
  align-items: center;
  gap: 14px;
  margin-left: 17px;
}

.qbtn {
  display: flex;
  align-items: center;
  gap: 12px;
}

.share {
  display: flex;
  align-items: center;
  gap: 8px;
  color: #7cc3fa;
}

.doc-title {
  display: flex;
  flex: 1;
  justify-content: center;
  gap: 24px;
  font-size: 20px;
  font-weight: normal;
}

.services {
  display: flex;
  align-items: center;
  gap: 11px;
}

.search {
  width: 312px;
  height: 34px;
  padding: 0 4px;
  border: none;
  background-color: #454f5d;
  color: #fff;
  font: italic 19px "Segoe UI", "Open Sans", "Noto Sans", sans-serif;
}

.search::placeholder {
  color: #a3aab5;
}

.icon-btn {
  display: flex;
  align-items: center;
  gap: 8px;
}

.login {
  margin-left: 4px;
}

.store {
  margin-left: 10px;
}

.vline {
  width: 2px;
  height: 32px;
  margin: 0 6px;
  background-color: #454d58;
}

.help {
  fill: #444;
  font-size: 20px;
  text-anchor: middle;
}

.win {
  display: flex;
  gap: 22px;
  margin: 0 12px 6px 124px;
}

/* ribbon tabs */
.tabs {
  display: flex;
  align-items: flex-end;
  gap: 1px;
  height: 39px;
  padding-left: 11px;
}

.tab {
  height: 35px;
  padding: 0 16px;
  color: #b3b8bf;
  line-height: 38px;
}

.tab.active {
  background-color: #3b4453;
  color: #f0f1f3;
}

.fold {
  display: flex;
  align-items: center;
  gap: 8px;
  height: 35px;
  margin-left: 38px;
}

/* ribbon */
.ribbon {
  display: flex;
  gap: 2px;
  padding: 0 4px 0 5px;
}

.panel {
  display: flex;
  flex-direction: column;
  background-color: #3b4453;
}

.panel-rest {
  flex: 1;
  margin-left: -2px;
  background-color: #3b4453;
}

.panel-body {
  display: flex;
  height: 146px;
  padding-top: 10px;
}

.panel-title {
  display: flex;
  align-items: center;
  justify-content: center;
  gap: 10px;
  height: 26px;
}

.panel-foot {
  position: relative;
  display: flex;
  justify-content: center;
  padding-right: 20px;
}

.launcher {
  position: absolute;
  right: 8px;
  top: 8px;
}

.draw {
  width: 444px;
}

.draw .panel-body {
  gap: 2px;
  padding-left: 6px;
}

.edit {
  width: 203px;
}

.edit .panel-body {
  gap: 16px;
  padding-left: 14px;
}

.annot {
  width: 242px;
}

.annot .panel-body {
  padding-left: 8px;
}

.draw .stack,
.annot .stack,
.props .stack {
  margin-left: 8px;
}

.block .stack,
.groups .stack {
  margin-left: 12px;
}

.layers {
  width: 473px;
}

.layers .panel-body {
  padding-left: 5px;
}

.block {
  width: 150px;
}

.block .panel-body {
  padding-left: 5px;
}

.props {
  width: 424px;
}

.props .panel-body {
  padding-left: 6px;
}

.groups {
  width: 129px;
}

.groups .panel-body {
  padding-left: 6px;
}

.utils {
  width: 185px;
}

.utils .panel-body,
.clip .panel-body {
  padding-left: 16px;
}

.utils .stack,
.clip .stack {
  margin-left: 22px;
}

.clip {
  width: 194px;
}

.big {
  display: flex;
  flex-direction: column;
  align-items: center;
  flex: none;
  padding-top: 5px;
  line-height: 31px;
}

.big svg {
  margin-bottom: 6px;
}

.w74 {
  width: 74px;
}

.w76 {
  width: 76px;
}

.w80 {
  width: 80px;
}

.w84 {
  width: 84px;
}

.w92 {
  width: 92px;
}

.w98 {
  width: 98px;
}

.w100 {
  width: 100px;
}

.w110 {
  width: 110px;
}

.w112 {
  width: 112px;
}

.w136 {
  width: 136px;
}

.stack {
  display: flex;
  flex-direction: column;
}

.small {
  display: flex;
  align-items: center;
  gap: 11px;
  height: 41px;
}

.pressed {
  width: 42px;
  height: 39px;
  margin: 0 -8px;
  padding-left: 5px;
  border: 2px solid #5f9fdb;
  background-color: #43607f;
}

.layer-col {
  width: 365px;
  margin: 2px 0 0 3px;
}

.layer-tools {
  display: grid;
  grid-template-columns: repeat(5, 28px);
  column-gap: 14px;
  margin: 1px 0 0 8px;
}

/* drop-down lists */
.combo {
  position: relative;
  display: flex;
  align-items: center;
  height: 38px;
  padding: 0 8px;
  border: 2px solid #2b3441;
  background-color: #4d586a;
}

.layer-combo {
  gap: 9px;
  padding-left: 11px;
}

.combo select {
  flex: 1;
  min-width: 0;
  padding: 0 24px 0 6px;
  border: none;
  background: none;
  color: #f0f1f3;
  font: inherit;
  appearance: none;
}

.layer-combo select {
  padding-left: 1px;
}

.combo .caret-lg {
  position: absolute;
  right: 4px;
  top: 14px;
  pointer-events: none;
}

.combos {
  display: flex;
  flex-direction: column;
  gap: 3px;
  width: 240px;
  margin: 2px 0 0 4px;
}

.swatch {
  width: 25px;
  height: 25px;
  background-color: #fff;
}

.swatch.lg {
  width: 28px;
  height: 28px;
}

.rule {
  width: 112px;
  height: 2px;
  background-color: #fff;
}

/* drawing tabs */
.files {
  display: flex;
  align-items: center;
  height: 55px;
  padding: 7px 0 0 18px;
  border-bottom: 7px solid #3b4453;
}

.file {
  margin-left: 14px;
}

.file-active {
  display: flex;
  align-items: center;
  justify-content: center;
  gap: 16px;
  width: 178px;
  height: 41px;
  margin: 0 15px;
  background-color: #3b4453;
  clip-path: polygon(16px 0, 100% 0, calc(100% - 16px) 100%, 0 100%);
  font-weight: bold;
}

.files .plus {
  margin-right: 18px;
}

/* drawing area */
.canvas {
  position: relative;
  flex: 1;
  overflow: hidden;
}

.drawing {
  position: absolute;
  top: 0;
  left: 0;
}

.grid {
  stroke: #333b46;
  shape-rendering: crispEdges;
}

.line {
  fill: none;
  stroke: #fff;
}

.crisp {
  shape-rendering: crispEdges;
}

.dim-text {
  fill: #fff;
  font: 26px "Liberation Sans", Arial, sans-serif;
}

.doc-win {
  position: absolute;
  top: 14px;
  right: 18px;
  display: flex;
  gap: 17px;
}

.navbar {
  position: absolute;
  top: 42px;
  right: 7px;
  display: flex;
  flex-direction: column;
  align-items: center;
  width: 54px;
  height: 219px;
  border-radius: 3px;
  background-color: #5a616a;
}

.navbar svg {
  fill: none;
  stroke: #424951;
  stroke-width: 2;
}

.navbar text {
  fill: #3c526a;
  stroke: none;
  font-size: 17px;
  font-weight: bold;
}

.navbar button {
  padding: 4px 0;
}

.nav-head {
  display: flex;
  justify-content: flex-end;
  width: 100%;
  height: 18px;
  margin-bottom: 6px;
  padding: 2px 3px;
  border-radius: 3px 3px 0 0;
  background-color: #686e77;
}

.nav-head svg,
.nav-foot svg {
  stroke: #50575f;
}

.nav-caret {
  margin-top: 4px;
  border-top-color: #3f464f;
}

.nav-foot {
  width: 100%;
  margin-top: auto;
  padding: 0 3px 2px 37px;
}

/* command line */
.command {
  position: absolute;
  left: 20%;
  right: 516px;
  bottom: 2px;
  color: #fff;
  font: 22px/27px Consolas, "DejaVu Sans Mono", "Liberation Mono", monospace;
}

.history {
  display: flex;
  flex-direction: column;
  align-items: flex-start;
  gap: 9px;
  margin: 0 0 6px 114px;
}

.history p {
  padding: 0 4px;
  border-radius: 3px;
  background-color: rgba(99, 99, 99, 0.95);
  white-space: nowrap;
}

.history .mid {
  background-color: rgba(90, 90, 90, 0.85);
  color: #e0e0e0;
}

.history .old {
  background-color: rgba(92, 92, 92, 0.75);
  color: #b9b9b9;
}

.cmd-row {
  display: flex;
  align-items: flex-end;
}

.cmd-handle {
  display: flex;
  align-items: center;
  gap: 14px;
  width: 104px;
  height: 46px;
  padding: 0 10px 0 15px;
  background-color: #2b3341;
}

.cmd-handle button + button {
  margin-left: 6px;
}

.grip {
  height: 32px;
  border-left: 2px dashed #dfe2e6;
}

.cmd-line {
  position: relative;
  flex: 1;
  height: 66px;
  padding: 1px 5px;
  border-radius: 3px;
  background-color: #fff;
  color: #000;
}

.cmd-text {
  display: flex;
  align-items: center;
  gap: 6px;
  height: 32px;
  white-space: nowrap;
}

.cmd-text span {
  margin-right: -6px;
}

.cmd-text .tail {
  margin-left: -6px;
}

.cmd-text b {
  margin-left: 5px;
}

.cmd-icon {
  opacity: 0.8;
}

.opt {
  height: 31px;
  padding: 0 1px;
  border-radius: 5px;
  background-color: #d2d2d2;
}

.opt em {
  color: #00f;
  font-style: normal;
}

.cmd-up {
  position: absolute;
  right: 6px;
  top: 28px;
}

/* status bar */
.status {
  display: flex;
  justify-content: space-between;
  height: 61px;
  border-top: 7px solid #3b4453;
}

.layouts {
  display: flex;
  align-items: center;
  height: 46px;
  padding-left: 17px;
}

.model {
  align-self: flex-start;
  width: 143px;
  height: 42px;
  background-color: #3b4453;
  clip-path: polygon(17px 0, 100% 0, calc(100% - 19px) 100%, 0 100%);
  font-weight: bold;
  line-height: 45px;
  text-align: center;
}

.layout {
  margin: 0 14px 0 12px;
}

.layouts .plus {
  margin: 0 17px;
}

.modes {
  display: flex;
  gap: 5px;
  padding: 4px 7px 0 0;
}

.group {
  display: flex;
  align-items: center;
  height: 41px;
  background-color: #3b4453;
}

.mode {
  display: flex;
  align-items: center;
  justify-content: center;
  width: 42px;
  height: 38px;
}

.mode.on {
  width: 40px;
  margin-right: 2px;
  background-color: #5c8dc2;
}

.drop {
  display: flex;
  justify-content: center;
  width: 28px;
}

.mode-text {
  padding: 0 7px;
  font-size: 21px;
}

.scale {
  display: flex;
  align-items: center;
  gap: 6px;
  padding: 0 7px 0 4px;
}

.sliver {
  width: 4px;
}
```
